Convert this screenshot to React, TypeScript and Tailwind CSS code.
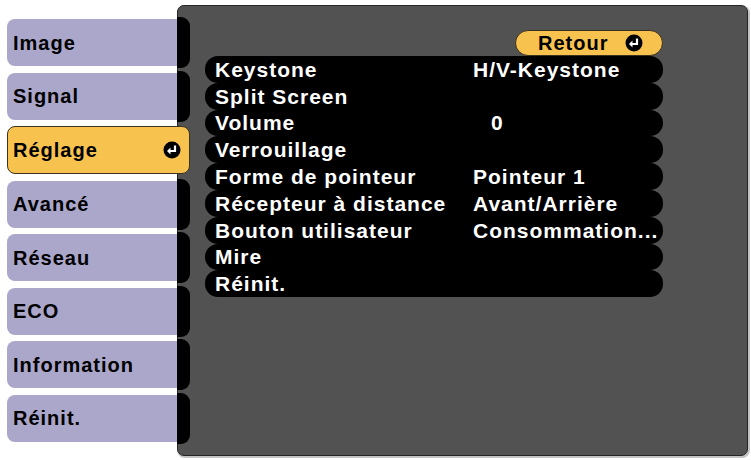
import React from 'react';

const tabs = ['Image', 'Signal', 'Réglage', 'Avancé', 'Réseau', 'ECO', 'Information', 'Réinit.'];

const rows: [string, string][] = [
  ['Keystone', 'H/V-Keystone'],
  ['Split Screen', ''],
  ['Volume', '0'],
  ['Verrouillage', ''],
  ['Forme de pointeur', 'Pointeur 1'],
  ['Récepteur à distance', 'Avant/Arrière'],
  ['Bouton utilisateur', 'Consommation...'],
  ['Mire', ''],
  ['Réinit.', ''],
];

function EnterIcon({ className = '' }: { className?: string }) {
  return (
    <svg viewBox="0 0 18 18" className={className}>
      <circle cx="9" cy="9" r="8.5" fill="#000" />
      <path d="M12 4.5V10H7" stroke="#fff" strokeWidth="2.2" fill="none" />
      <path d="M4 10L7.5 6.6V13.4Z" fill="#fff" />
    </svg>
  );
}

export default function App() {
  const font = { fontFamily: '"Liberation Sans", Arial, sans-serif' };
  return (
    <div className="w-[751px] h-[460px] bg-white flex pt-[5px] overflow-hidden" style={font}>
      {/* Tabs */}
      <div className="relative z-10 ml-[7px] mt-[14px] w-[183px] flex flex-col gap-[6.5px] shrink-0">
        {tabs.map((t) =>
          t === 'Réglage' ? (
            <div
              key={t}
              className="h-[48px] rounded-[8px] border border-[#3b3322] bg-[#f8c24f] flex items-center justify-between pl-[5px] pr-[8px]"
            >
              <span className="text-[20px] font-bold tracking-[1px] text-black">{t}</span>
              <EnterIcon className="w-[18px] h-[18px]" />
            </div>
          ) : (
            <div key={t} className="h-[47px] flex">
              <div className="flex-1 rounded-l-[8px] bg-[#aaa7cb] flex items-center pl-[6px]">
                <span className="text-[20px] font-bold tracking-[1px] text-black">{t}</span>
              </div>
              <div className="w-[13px] bg-black rounded-r-[9px] -my-[2px]" />
            </div>
          )
        )}
      </div>

      {/* Main panel */}
      <div className="-ml-[13px] w-[571px] h-[451px] rounded-[7px] border border-[#262626] bg-[#525252] shadow-[1px_1px_0_1px_#c4c4c4] flex flex-col pl-[27px] pt-[24px]">
        <div className="w-[458px] flex justify-end">
          <div className="h-[26px] w-[148px] rounded-full border border-[#3a3020] bg-[#f8c24f] flex items-center pl-[22px] pr-[19px] justify-between">
            <span className="text-[20px] font-bold tracking-[1px] text-black leading-none">Retour</span>
            <EnterIcon className="w-[18px] h-[18px]" />
          </div>
        </div>
        <div className="w-[458px] flex flex-col">
          {rows.map(([label, value]) => (
            <div key={label} className="h-[26.8px] rounded-[13px] bg-black flex items-center pl-[10px] text-white">
              <span className="w-[258px] text-[21px] font-bold tracking-[1px] leading-none">{label}</span>
              <span className={`text-[21px] font-bold tracking-[1px] leading-none ${value === '0' ? 'pl-[18px]' : ''}`}>
                {value}
              </span>
            </div>
          ))}
        </div>
      </div>
    </div>
  );
}
